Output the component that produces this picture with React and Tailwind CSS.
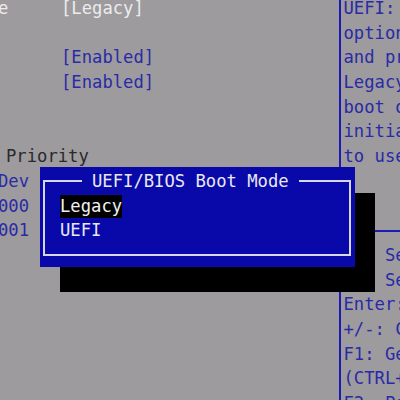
import React from "react";

const helpTop = [
	"UEFI: Select UEFI",
	"option ROMs only",
	"and processes.",
	"Legacy: Select",
	"boot options for",
	"initialization",
	"to use.",
	"",
	"",
];

const helpKeys = [
	"><: Select Screen",
	"^v: Select Item",
	"Enter: Select",
	"+/-: Change Opt.",
	"F1: General Help",
	"(CTRL+Q from remote",
	"F2: Previous Values",
];

const Row = ({ children, className = "" }) => (
	<div className={`h-[24.7px] whitespace-pre ${className}`}>{children}</div>
);

const App = () => {
	return (
		<div className="relative w-[400px] h-[400px] overflow-hidden bg-[#9d9b9e] font-['DejaVu_Sans_Mono','Liberation_Mono',monospace] text-[17.2px] leading-[24.7px]">
			<div className="flex -mt-[4px] h-[404px]">
				{/* Settings column */}
				<div className="w-[339px] shrink-0">
					<Row className="flex text-[#ececec]">
						<span className="-ml-[2px] w-[63px]">e</span>
						<span>[Legacy]</span>
					</Row>
					<Row />
					<Row className="pl-[61px] text-[#2a2aa6]">[Enabled]</Row>
					<Row className="pl-[61px] text-[#2a2aa6]">[Enabled]</Row>
					<Row />
					<Row />
					<Row className="pl-[6px] text-[#2a2a2c]">Priority</Row>
					<Row className="-ml-[2px] text-[#2a2aa6]">Dev</Row>
					<Row className="-ml-[2px] text-[#2a2aa6]">000</Row>
					<Row className="-ml-[2px] text-[#2a2aa6]">001</Row>
				</div>

				{/* Help column */}
				<div className="flex-1 overflow-hidden border-l-2 border-[#1c1cb4] text-[#2a2aa6]">
					{helpTop.map((line, i) => (
						<Row key={i} className="pl-[2.5px]">
							{line}
						</Row>
					))}
					<Row className="flex items-center">
						<div className="h-[2px] w-full bg-[#1c1cb4]" />
					</Row>
					{helpKeys.map((line, i) => (
						<Row key={i} className="pl-[2.5px]">
							{line}
						</Row>
					))}
				</div>
			</div>

			{/* Popup shadow */}
			<div className="absolute left-[60px] top-[193px] w-[315px] h-[99px] bg-black" />

			{/* Popup */}
			<div className="absolute left-[40px] top-[167px] w-[315px] h-[100px] bg-[#0909a9] pl-[3px] pt-[12.5px]">
				<div className="relative w-[308px] h-[76px] border-2 border-[#d6d6e4] pl-[15px] pt-[12px] text-[#e8e8f0]">
					<div className="absolute -top-[13px] left-[37px] bg-[#0909a9] px-[10px] whitespace-pre">
						UEFI/BIOS Boot Mode
					</div>
					<Row>
						<span className="inline-block bg-black leading-[23px] text-[#f0f0f0]">
							Legacy
						</span>
					</Row>
					<Row>UEFI</Row>
				</div>
			</div>
		</div>
	);
};

export default App;
